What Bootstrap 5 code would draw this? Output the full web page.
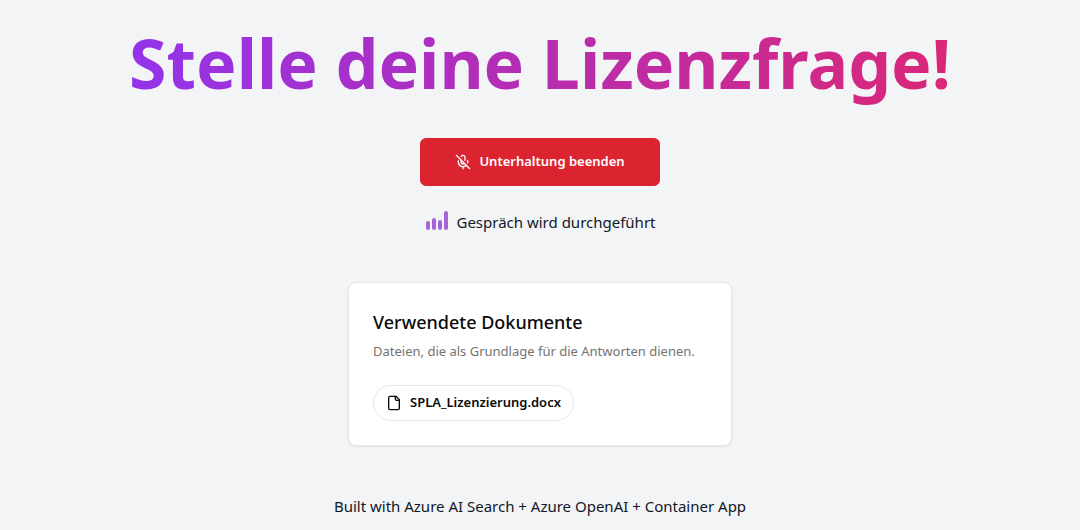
<!DOCTYPE html>
<html lang="de">
<head>
<meta charset="utf-8">
<meta name="viewport" content="width=device-width, initial-scale=1">
<title>Stelle deine Lizenzfrage!</title>
<link href="https://cdn.jsdelivr.net/npm/bootstrap@5.3.0/dist/css/bootstrap.min.css" rel="stylesheet">
<style>
body { background: #f3f4f6; color: #111827; font-family: "Noto Sans", "Open Sans", sans-serif; font-size: 15px; line-height: 24px; }
.hero-title { font-size: 68px; line-height: 94px; margin-bottom: 28px; font-weight: 700; background: linear-gradient(to right, #9333ea, #db2777); -webkit-background-clip: text; background-clip: text; color: transparent; }
.end-btn { --bs-btn-bg: #dc2430; --bs-btn-border-color: #dc2430; --bs-btn-color: #fff; --bs-btn-hover-bg: #c81e2a; --bs-btn-hover-color: #fff; width: 240px; height: 48px; font-size: 13px; font-weight: 600; }
.status-bars { color: #a565d6; }
.docs { max-width: 384px; border-color: #e5e7eb; border-radius: 8px; color: #0a0a0a; box-shadow: 0 1px 2px rgba(0, 0, 0, .08); }
.docs-title { font-size: 18px; line-height: 30px; font-weight: 500; }
.docs-text { font-size: 13px; line-height: 20px; color: #737373; }
.file-chip { --bs-btn-border-color: #e5e7eb; --bs-btn-color: #0a0a0a; --bs-btn-hover-bg: #f5f5f5; height: 36px; font-size: 13px; font-weight: 600; }
</style>
</head>
<body>
<main class="d-flex flex-column align-items-center px-3 pt-3">
<h1 class="hero-title text-center">Stelle deine Lizenzfrage!</h1>
<button type="button" class="btn end-btn d-flex align-items-center justify-content-center gap-2 mb-4">
<svg width="16" height="16" viewBox="0 0 24 24" fill="none" stroke="currentColor" stroke-width="2" stroke-linecap="round" stroke-linejoin="round" aria-hidden="true"><path d="M2 2l20 20M18.89 13.23A7.12 7.12 0 0 0 19 12v-2M5 10v2a7 7 0 0 0 12 5M15 9.34V5a3 3 0 0 0-5.68-1.33M9 9v3a3 3 0 0 0 5.12 2.12M12 19v3"/></svg>
Unterhaltung beenden</button>
<p class="d-flex gap-2 mb-5">
<svg class="status-bars" width="24" height="24" viewBox="0 0 24 24" fill="currentColor" aria-hidden="true"><rect x="2" y="11" width="4" height="9" rx="2"/><rect x="8" y="8" width="4" height="12" rx="2"/><rect x="14" y="10" width="4" height="10" rx="2"/><rect x="20" y="1" width="4" height="19" rx="2"/></svg>
Gespräch wird durchgeführt</p>
<section class="card docs w-100 p-4 mb-5">
<h2 class="docs-title mb-1">Verwendete Dokumente</h2>
<p class="docs-text mb-4">Dateien, die als Grundlage für die Antworten dienen.</p>
<button type="button" class="btn file-chip rounded-pill align-self-start d-flex align-items-center gap-2">
<svg width="16" height="16" viewBox="0 0 24 24" fill="none" stroke="currentColor" stroke-width="2" stroke-linecap="round" stroke-linejoin="round" aria-hidden="true"><path d="M15 2H6a2 2 0 0 0-2 2v16a2 2 0 0 0 2 2h12a2 2 0 0 0 2-2V7Z"/><path d="M14 2v4a2 2 0 0 0 2 2h4"/></svg>
SPLA_Lizenzierung.docx</button>
</section>
</main>
<footer class="text-center">Built with Azure AI Search + Azure OpenAI + Container App</footer>
<script src="https://cdn.jsdelivr.net/npm/bootstrap@5.3.0/dist/js/bootstrap.bundle.min.js"></script>
</body>
</html>
